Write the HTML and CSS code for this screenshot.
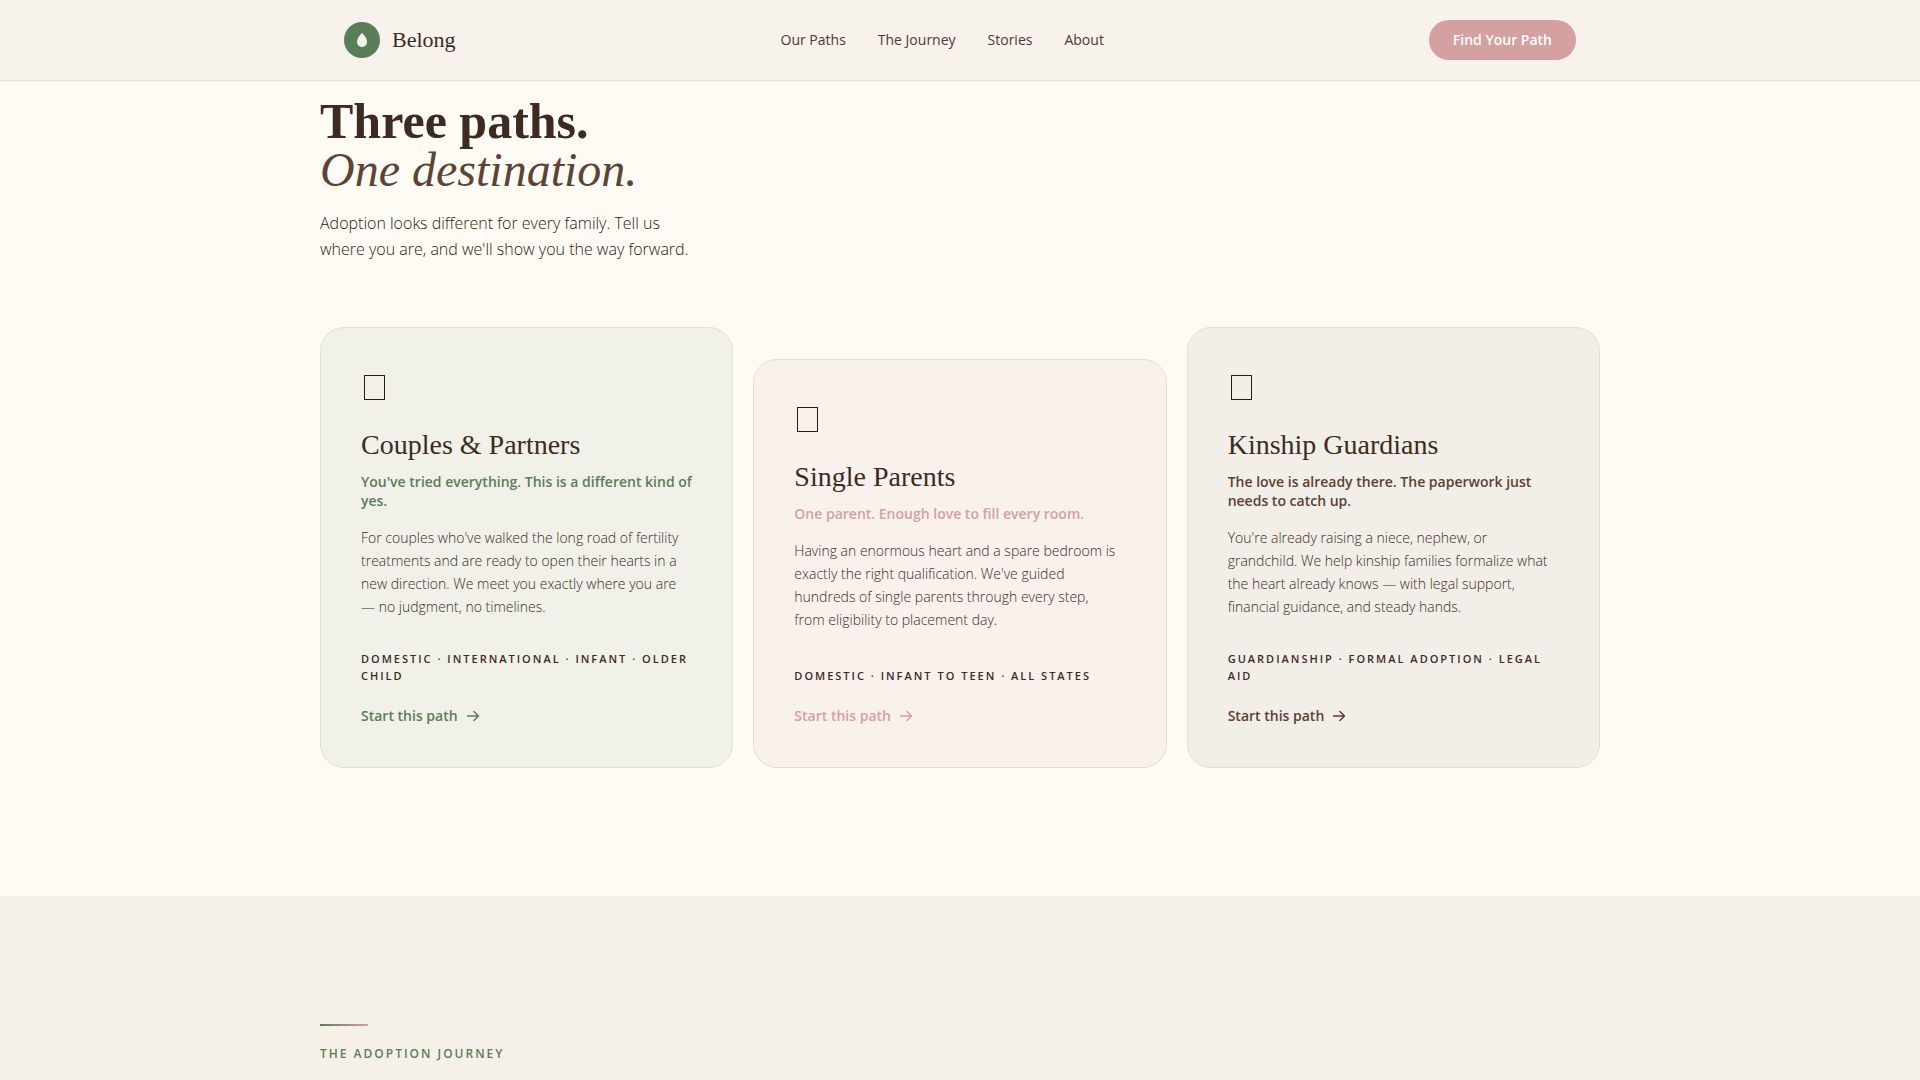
FILE: index.html
```html
<!DOCTYPE html>
<html lang="en">
<head>
<meta charset="utf-8">
<meta name="viewport" content="width=device-width, initial-scale=1">
<title>Belong</title>
<link rel="stylesheet" href="styles.css">
</head>
<body>
<header class="site-header">
  <div class="container header-row">
    <a class="brand" href="#">
      <svg class="brand-mark" viewBox="0 0 36 36" aria-hidden="true">
        <circle cx="18" cy="18" r="18" fill="#5a7d5a"/>
        <path d="M18 11C15.400 13.300 13 16.600 13 19.800C13 22.900 15 25 18 25C21 25 23 22.900 23 19.800C23 16.600 20.600 13.300 18 11Z" fill="#eff3ec"/>
      </svg>
      <span class="brand-name">Belong</span>
    </a>
    <nav class="nav">
      <a href="#paths">Our Paths</a>
      <a href="#journey">The Journey</a>
      <a href="#stories">Stories</a>
      <a href="#about">About</a>
    </nav>
    <button class="cta" type="button">Find Your Path</button>
  </div>
</header>
<main>
  <section class="paths" id="paths">
    <div class="container">
      <h1 class="headline">Three paths.<br><em>One destination.</em></h1>
      <p class="lead">Adoption looks different for every family. Tell us<br>where you are, and we'll show you the way forward.</p>
      <div class="cards">
        <article class="card card-sage">
          <span class="card-icon" aria-hidden="true"></span>
          <h2>Couples &amp; Partners</h2>
          <p class="tagline">You've tried everything. This is a different kind of<br>yes.</p>
          <p class="desc">For couples who've walked the long road of fertility<br>treatments and are ready to open their hearts in a<br>new direction. We meet you exactly where you are<br>— no judgment, no timelines.</p>
          <p class="tags">Domestic · International · Infant · Older Child</p>
          <a class="start" href="#couples">Start this path <svg viewBox="0 0 14 14" aria-hidden="true"><path d="M1.500 7H12.500M8 2.500L12.500 7L8 11.500"/></svg></a>
        </article>
        <article class="card card-rose">
          <span class="card-icon" aria-hidden="true"></span>
          <h2>Single Parents</h2>
          <p class="tagline">One parent. Enough love to fill every room.</p>
          <p class="desc">Having an enormous heart and a spare bedroom is<br>exactly the right qualification. We've guided<br>hundreds of single parents through every step,<br>from eligibility to placement day.</p>
          <p class="tags">Domestic · Infant to Teen · All States</p>
          <a class="start" href="#single">Start this path <svg viewBox="0 0 14 14" aria-hidden="true"><path d="M1.500 7H12.500M8 2.500L12.500 7L8 11.500"/></svg></a>
        </article>
        <article class="card card-earth">
          <span class="card-icon" aria-hidden="true"></span>
          <h2>Kinship Guardians</h2>
          <p class="tagline">The love is already there. The paperwork just<br>needs to catch up.</p>
          <p class="desc">You're already raising a niece, nephew, or<br>grandchild. We help kinship families formalize what<br>the heart already knows — with legal support,<br>financial guidance, and steady hands.</p>
          <p class="tags">Guardianship · Formal Adoption · Legal Aid</p>
          <a class="start" href="#kinship">Start this path <svg viewBox="0 0 14 14" aria-hidden="true"><path d="M1.500 7H12.500M8 2.500L12.500 7L8 11.500"/></svg></a>
        </article>
      </div>
    </div>
  </section>
  <section class="journey" id="journey">
    <div class="container">
      <div class="rule"></div>
      <p class="eyebrow">The Adoption Journey</p>
    </div>
  </section>
</main>
</body>
</html>
```
FILE: styles.css
```css
* { box-sizing: border-box; }

body {
  margin: 0;
  min-height: 100vh;
  display: flex;
  flex-direction: column;
  background: #fefaf4;
  color: #3d2b1f;
  font-family: "Open Sans", sans-serif;
}

h1, h2, p { margin: 0; }
a { color: inherit; text-decoration: none; }

main { flex: 1; display: flex; flex-direction: column; }

.container { width: 100%; max-width: 1280px; margin: 0 auto; }

.site-header {
  position: sticky;
  top: 0;
  background: #f7f2eb;
  border-bottom: 1px solid #e8e2db;
  box-shadow: 0 1px 2px rgba(61, 43, 31, 0.04);
}
.header-row {
  display: flex;
  align-items: center;
  justify-content: space-between;
  padding: 20px 24px;
}
.brand { display: flex; align-items: center; gap: 12px; }
.brand-mark { width: 36px; height: 36px; }
.brand-name { font: 500 22px/28px "Liberation Serif", serif; }
.nav { display: flex; gap: 32px; font-size: 14px; line-height: 20px; color: #4e382c; }
.cta {
  height: 40px;
  padding: 0 24px;
  border: 0;
  border-radius: 20px;
  background: #d4a0a0;
  color: #fff;
  font: 600 14px/20px "Open Sans", sans-serif;
}

.paths { padding: 16px 0 128px; }
.headline { font: 700 50px/48px "Liberation Serif", serif; }
.headline em { font-size: 48px; font-weight: 400; color: #5c4435; }
.lead { margin-top: 16px; font-size: 16px; font-weight: 300; line-height: 26px; color: #2c1a0e; }

.cards {
  display: grid;
  grid-template-columns: repeat(3, 1fr);
  gap: 20px;
  margin-top: 65px;
}
.card {
  display: flex;
  flex-direction: column;
  align-items: flex-start;
  padding: 40px;
  border: 1px solid #e2dfd8;
  border-radius: 24px;
}
.card-sage { background: #f1f1e9; --accent: #5a7d5a; }
.card-rose { background: #f9f1ec; --accent: #d4a0a0; margin-top: 32px; }
.card-earth { background: #f2efe8; --accent: #5c4033; }
.card-icon { width: 21px; height: 25px; margin: 7px 0 30px 3px; border: 1px solid #2c1a0e; }
.card h2 { font: 400 28px/30px "Liberation Serif", serif; }
.tagline { margin-top: 12px; font-size: 14px; font-weight: 600; line-height: 19px; color: var(--accent); }
.desc { margin-top: 16px; font-size: 14px; font-weight: 300; line-height: 23px; color: #3d2b1f; }
.tags {
  margin-top: auto;
  padding-top: 32px;
  font-size: 11px;
  font-weight: 600;
  line-height: 17px;
  letter-spacing: 2px;
  text-transform: uppercase;
}
.start {
  display: flex;
  align-items: center;
  gap: 8px;
  margin-top: 21px;
  font-size: 14px;
  font-weight: 600;
  line-height: 22px;
  color: var(--accent);
}
.start svg { width: 14px; height: 14px; fill: none; stroke: currentColor; stroke-width: 1.5; stroke-linecap: round; stroke-linejoin: round; }

.journey { flex: 1; padding-top: 128px; background: #f5f0e8; }
.rule { width: 48px; height: 2px; background: linear-gradient(90deg, #5a7d5a, #d4a0a0); }
.eyebrow {
  margin-top: 18px;
  font-size: 12px;
  font-weight: 600;
  line-height: 20px;
  letter-spacing: 2px;
  text-transform: uppercase;
  color: #5a7d5a;
}
```
